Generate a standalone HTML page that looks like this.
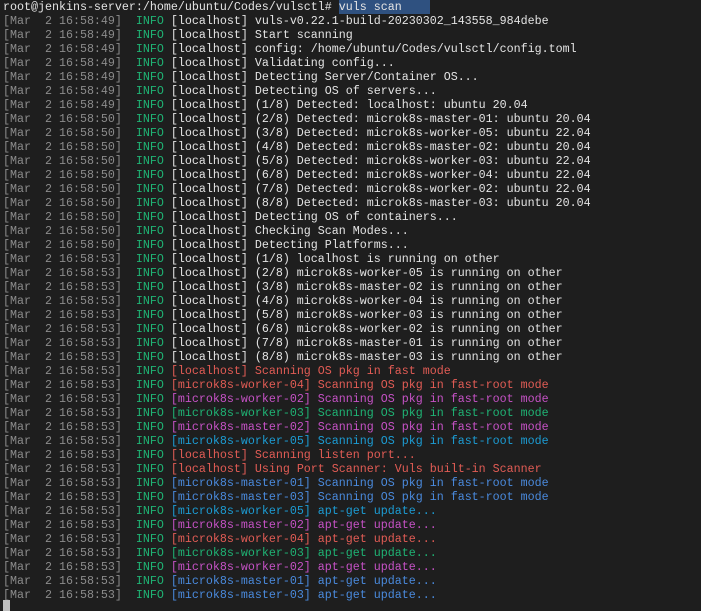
<!DOCTYPE html><html><head><style>
body{margin:0;background:#1e1e1e;width:701px;height:611px;overflow:hidden}
pre{margin:0;padding:0 0 0 3px;font-family:"Liberation Mono",monospace;font-size:11.67px;line-height:14px;color:#e4e4e4;white-space:pre}
.d{color:#8c8c8c}.i{color:#1fb374}.r{color:#e25c55}.m{color:#c652c6}.g{color:#1fb374}.c{color:#1c9cd4}.b{color:#4a8add}
.s{background:#2f5180}
.cur{position:absolute;left:3px;top:600px;width:7px;height:11px;background:#bdbdbd}
</style></head><body><pre>root@jenkins-server:/home/ubuntu/Codes/vulsctl# <span class="s">vuls scan    </span>
<span class="d">[Mar  2 16:58:49]</span>  <span class="i">INFO</span> [localhost] vuls-v0.22.1-build-20230302_143558_984debe
<span class="d">[Mar  2 16:58:49]</span>  <span class="i">INFO</span> [localhost] Start scanning
<span class="d">[Mar  2 16:58:49]</span>  <span class="i">INFO</span> [localhost] config: /home/ubuntu/Codes/vulsctl/config.toml
<span class="d">[Mar  2 16:58:49]</span>  <span class="i">INFO</span> [localhost] Validating config...
<span class="d">[Mar  2 16:58:49]</span>  <span class="i">INFO</span> [localhost] Detecting Server/Container OS...
<span class="d">[Mar  2 16:58:49]</span>  <span class="i">INFO</span> [localhost] Detecting OS of servers...
<span class="d">[Mar  2 16:58:49]</span>  <span class="i">INFO</span> [localhost] (1/8) Detected: localhost: ubuntu 20.04
<span class="d">[Mar  2 16:58:50]</span>  <span class="i">INFO</span> [localhost] (2/8) Detected: microk8s-master-01: ubuntu 20.04
<span class="d">[Mar  2 16:58:50]</span>  <span class="i">INFO</span> [localhost] (3/8) Detected: microk8s-worker-05: ubuntu 22.04
<span class="d">[Mar  2 16:58:50]</span>  <span class="i">INFO</span> [localhost] (4/8) Detected: microk8s-master-02: ubuntu 20.04
<span class="d">[Mar  2 16:58:50]</span>  <span class="i">INFO</span> [localhost] (5/8) Detected: microk8s-worker-03: ubuntu 22.04
<span class="d">[Mar  2 16:58:50]</span>  <span class="i">INFO</span> [localhost] (6/8) Detected: microk8s-worker-04: ubuntu 22.04
<span class="d">[Mar  2 16:58:50]</span>  <span class="i">INFO</span> [localhost] (7/8) Detected: microk8s-worker-02: ubuntu 22.04
<span class="d">[Mar  2 16:58:50]</span>  <span class="i">INFO</span> [localhost] (8/8) Detected: microk8s-master-03: ubuntu 20.04
<span class="d">[Mar  2 16:58:50]</span>  <span class="i">INFO</span> [localhost] Detecting OS of containers...
<span class="d">[Mar  2 16:58:50]</span>  <span class="i">INFO</span> [localhost] Checking Scan Modes...
<span class="d">[Mar  2 16:58:50]</span>  <span class="i">INFO</span> [localhost] Detecting Platforms...
<span class="d">[Mar  2 16:58:53]</span>  <span class="i">INFO</span> [localhost] (1/8) localhost is running on other
<span class="d">[Mar  2 16:58:53]</span>  <span class="i">INFO</span> [localhost] (2/8) microk8s-worker-05 is running on other
<span class="d">[Mar  2 16:58:53]</span>  <span class="i">INFO</span> [localhost] (3/8) microk8s-master-02 is running on other
<span class="d">[Mar  2 16:58:53]</span>  <span class="i">INFO</span> [localhost] (4/8) microk8s-worker-04 is running on other
<span class="d">[Mar  2 16:58:53]</span>  <span class="i">INFO</span> [localhost] (5/8) microk8s-worker-03 is running on other
<span class="d">[Mar  2 16:58:53]</span>  <span class="i">INFO</span> [localhost] (6/8) microk8s-worker-02 is running on other
<span class="d">[Mar  2 16:58:53]</span>  <span class="i">INFO</span> [localhost] (7/8) microk8s-master-01 is running on other
<span class="d">[Mar  2 16:58:53]</span>  <span class="i">INFO</span> [localhost] (8/8) microk8s-master-03 is running on other
<span class="d">[Mar  2 16:58:53]</span>  <span class="i">INFO</span> <span class="r">[localhost] Scanning OS pkg in fast mode</span>
<span class="d">[Mar  2 16:58:53]</span>  <span class="i">INFO</span> <span class="r">[microk8s-worker-04] Scanning OS pkg in fast-root mode</span>
<span class="d">[Mar  2 16:58:53]</span>  <span class="i">INFO</span> <span class="m">[microk8s-worker-02] Scanning OS pkg in fast-root mode</span>
<span class="d">[Mar  2 16:58:53]</span>  <span class="i">INFO</span> <span class="g">[microk8s-worker-03] Scanning OS pkg in fast-root mode</span>
<span class="d">[Mar  2 16:58:53]</span>  <span class="i">INFO</span> <span class="m">[microk8s-master-02] Scanning OS pkg in fast-root mode</span>
<span class="d">[Mar  2 16:58:53]</span>  <span class="i">INFO</span> <span class="c">[microk8s-worker-05] Scanning OS pkg in fast-root mode</span>
<span class="d">[Mar  2 16:58:53]</span>  <span class="i">INFO</span> <span class="r">[localhost] Scanning listen port...</span>
<span class="d">[Mar  2 16:58:53]</span>  <span class="i">INFO</span> <span class="r">[localhost] Using Port Scanner: Vuls built-in Scanner</span>
<span class="d">[Mar  2 16:58:53]</span>  <span class="i">INFO</span> <span class="b">[microk8s-master-01] Scanning OS pkg in fast-root mode</span>
<span class="d">[Mar  2 16:58:53]</span>  <span class="i">INFO</span> <span class="b">[microk8s-master-03] Scanning OS pkg in fast-root mode</span>
<span class="d">[Mar  2 16:58:53]</span>  <span class="i">INFO</span> <span class="c">[microk8s-worker-05] apt-get update...</span>
<span class="d">[Mar  2 16:58:53]</span>  <span class="i">INFO</span> <span class="m">[microk8s-master-02] apt-get update...</span>
<span class="d">[Mar  2 16:58:53]</span>  <span class="i">INFO</span> <span class="r">[microk8s-worker-04] apt-get update...</span>
<span class="d">[Mar  2 16:58:53]</span>  <span class="i">INFO</span> <span class="g">[microk8s-worker-03] apt-get update...</span>
<span class="d">[Mar  2 16:58:53]</span>  <span class="i">INFO</span> <span class="m">[microk8s-worker-02] apt-get update...</span>
<span class="d">[Mar  2 16:58:53]</span>  <span class="i">INFO</span> <span class="b">[microk8s-master-01] apt-get update...</span>
<span class="d">[Mar  2 16:58:53]</span>  <span class="i">INFO</span> <span class="b">[microk8s-master-03] apt-get update...</span></pre>
<div class="cur"></div>
</body></html>
